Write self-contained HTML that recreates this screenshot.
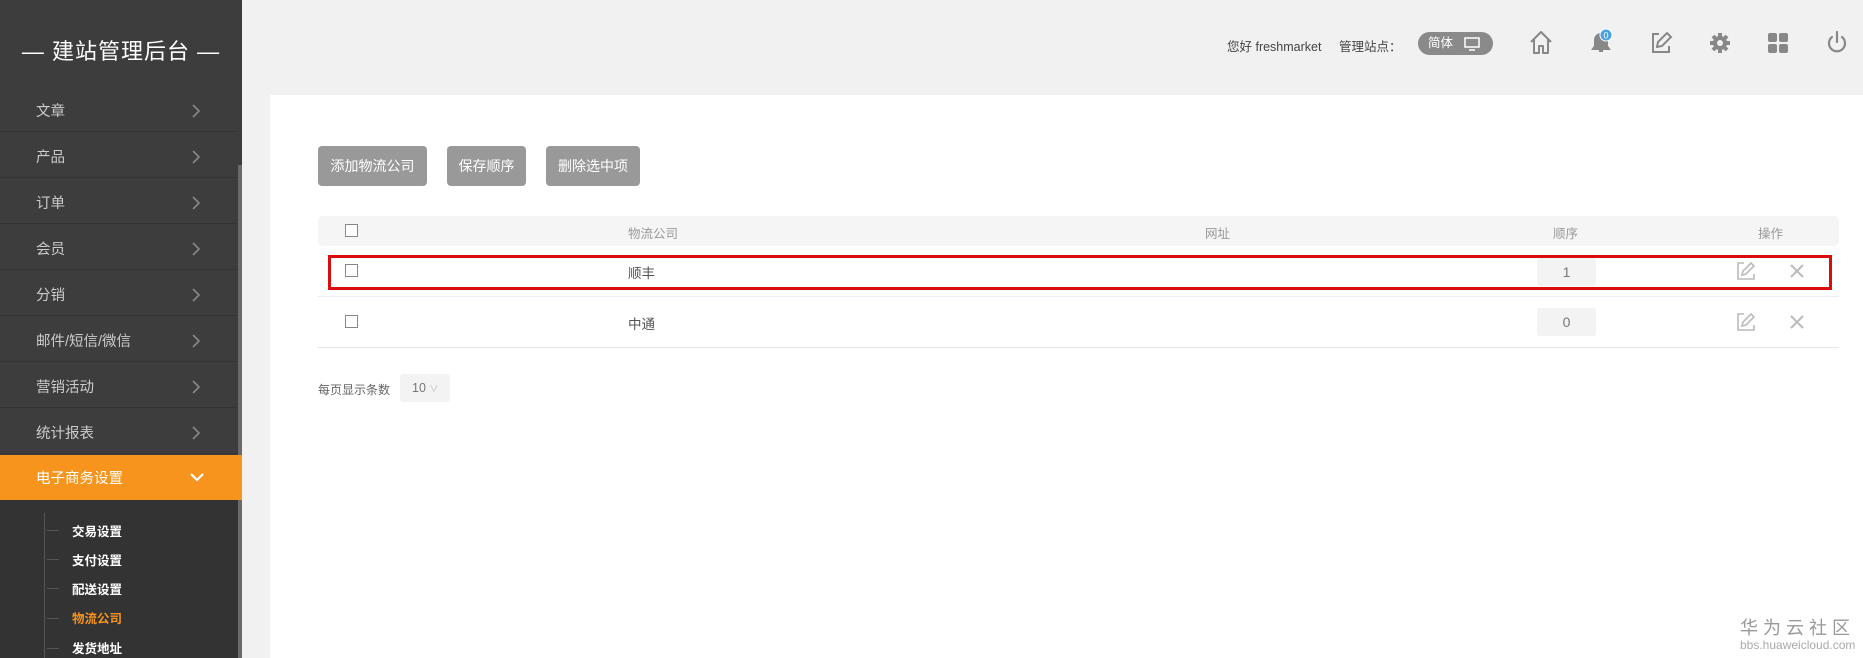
<!DOCTYPE html>
<html><head><meta charset="utf-8"><style>
*{margin:0;padding:0;box-sizing:border-box}
body{width:1863px;height:658px;overflow:hidden;background:#f1f1f1;font-family:"Liberation Sans","Noto Sans CJK SC",sans-serif;position:relative}
.a{position:absolute}
#side{left:0;top:0;width:242px;height:658px;background:#3d3d3d}
.title{left:0;width:242px;top:34px;text-align:center;color:#fff;font-size:22px;letter-spacing:1px}
.mi{left:0;width:238px;height:46px;border-bottom:1px solid #343434;color:#ccc;font-size:14.5px;line-height:52px;padding-left:36px}
.mi svg{position:absolute;left:191px;top:18px}
.sub{left:0;top:500px;width:238px;height:158px;background:#333}
.si{left:72px;color:#fff;font-size:12.5px;font-weight:bold}
.dash{left:47px;width:12px;height:1px;background:#555}
.btn{top:146px;height:40px;background:#999;color:#fff;border-radius:4px;font-size:14px;line-height:40px;text-align:center}
.th{font-size:12.5px;color:#999}
.cb{width:13px;height:13px;border:1px solid #888;background:#fff}
.td{font-size:13.5px;color:#555}
.ord{left:1537px;width:59px;height:28px;background:#f3f3f3;border-radius:3px;text-align:center;line-height:28px;color:#777;font-size:14px}
</style></head><body>
<div id="side" class="a">
<div class="a title">— 建站管理后台 —</div>
<div class="a" style="left:238px;top:165px;width:4px;height:493px;background:#6a6a6a"></div>
<div class="a mi" style="top:86px">文章<svg width="10" height="14"><path d="M2 1l6 6-6 6" stroke="#888" stroke-width="1.6" fill="none"/></svg></div>
<div class="a mi" style="top:132px">产品<svg width="10" height="14"><path d="M2 1l6 6-6 6" stroke="#888" stroke-width="1.6" fill="none"/></svg></div>
<div class="a mi" style="top:178px">订单<svg width="10" height="14"><path d="M2 1l6 6-6 6" stroke="#888" stroke-width="1.6" fill="none"/></svg></div>
<div class="a mi" style="top:224px">会员<svg width="10" height="14"><path d="M2 1l6 6-6 6" stroke="#888" stroke-width="1.6" fill="none"/></svg></div>
<div class="a mi" style="top:270px">分销<svg width="10" height="14"><path d="M2 1l6 6-6 6" stroke="#888" stroke-width="1.6" fill="none"/></svg></div>
<div class="a mi" style="top:316px">邮件/短信/微信<svg width="10" height="14"><path d="M2 1l6 6-6 6" stroke="#888" stroke-width="1.6" fill="none"/></svg></div>
<div class="a mi" style="top:362px">营销活动<svg width="10" height="14"><path d="M2 1l6 6-6 6" stroke="#888" stroke-width="1.6" fill="none"/></svg></div>
<div class="a mi" style="top:408px">统计报表<svg width="10" height="14"><path d="M2 1l6 6-6 6" stroke="#888" stroke-width="1.6" fill="none"/></svg></div>
<div class="a sub"></div>
<div class="a" style="left:0;top:455px;width:242px;height:45px;background:#f7941d"></div>
<div class="a" style="left:36px;top:457px;height:45px;line-height:45px;color:#fff;font-size:14.5px">电子商务设置</div>
<svg class="a" style="left:189px;top:472px" width="16" height="10"><path d="M2 2l6 6 6-6" stroke="#fff" stroke-width="2.2" fill="none"/></svg>
<div class="a" style="left:44px;top:513px;width:1px;height:145px;background:#555"></div>
<div class="a dash" style="top:530px"></div><div class="a si" style="top:521px">交易设置</div>
<div class="a dash" style="top:559px"></div><div class="a si" style="top:550px">支付设置</div>
<div class="a dash" style="top:588px"></div><div class="a si" style="top:579px">配送设置</div>
<div class="a dash" style="top:618px"></div><div class="a si" style="top:608px;color:#f7941d">物流公司</div>
<div class="a dash" style="top:648px"></div><div class="a si" style="top:638px">发货地址</div>
</div>
<div class="a" style="left:1227px;top:36px;font-size:12.5px;color:#444">您好 freshmarket</div>
<div class="a" style="left:1339px;top:36px;font-size:12.5px;color:#444">管理站点：</div>
<div class="a" style="left:1418px;top:32px;width:75px;height:23px;border-radius:12px;background:#8a8a8a;color:#fff;font-size:12.5px;line-height:23px;padding-left:10px">简体
<svg class="a" style="left:46px;top:5px" width="16" height="14"><rect x="1" y="1" width="14" height="9" fill="none" stroke="#fff" stroke-width="1.5"/><path d="M5 13h6" stroke="#fff" stroke-width="1.5"/></svg></div>
<svg class="a" style="left:1529px;top:30px" width="24" height="26"><path d="M2 12L12 2l10 10M5 9v14h5v-7h4v7h5V9" stroke="#888" stroke-width="2" fill="none" stroke-linejoin="round"/></svg>
<svg class="a" style="left:1589px;top:28px" width="26" height="28"><path d="M4 21h16l-2-3v-6a6 6 0 0 0-12 0v6zM10 23h4" stroke="#888" stroke-width="2" fill="#888"/><circle cx="17" cy="7" r="6" fill="#4aa3df" stroke="#fff" stroke-width="1"/><text x="17" y="10.5" font-size="9" fill="#fff" text-anchor="middle" font-family="Liberation Sans">0</text></svg>
<svg class="a" style="left:1649px;top:31px" width="24" height="24"><path d="M10 3H4v18h16v-6" stroke="#888" stroke-width="2" fill="none"/><path d="M8 16l1-5 9-9 4 4-9 9z" stroke="#888" stroke-width="2" fill="none"/></svg>
<svg class="a" style="left:1708px;top:31px" width="24" height="24"><circle cx="12" cy="12" r="7" fill="#888"/><path d="M12 2v20M2 12h20M5 5l14 14M19 5L5 19" stroke="#888" stroke-width="4"/><circle cx="12" cy="12" r="3" fill="#f1f1f1"/></svg>
<svg class="a" style="left:1767px;top:32px" width="22" height="22"><rect x="1" y="1" width="9" height="9" rx="2" fill="#888"/><rect x="12" y="1" width="9" height="9" rx="2" fill="#888"/><rect x="1" y="12" width="9" height="9" rx="2" fill="#888"/><rect x="12" y="12" width="9" height="9" rx="2" fill="#888"/></svg>
<svg class="a" style="left:1825px;top:30px" width="24" height="26"><path d="M7 7a8 8 0 1 0 10 0M12 2v10" stroke="#888" stroke-width="2.2" fill="none" stroke-linecap="round"/></svg>
<div class="a" style="left:270px;top:95px;width:1593px;height:563px;background:#fff"></div>
<div class="a btn" style="left:318px;width:109px">添加物流公司</div>
<div class="a btn" style="left:447px;width:79px">保存顺序</div>
<div class="a btn" style="left:546px;width:94px">删除选中项</div>
<div class="a" style="left:318px;top:216px;width:1521px;height:30px;background:#f5f5f5;border-radius:5px"></div>
<div class="a cb" style="left:345px;top:224px"></div>
<div class="a th" style="left:628px;top:223px">物流公司</div>
<div class="a th" style="left:1205px;top:223px">网址</div>
<div class="a th" style="left:1553px;top:223px">顺序</div>
<div class="a th" style="left:1758px;top:223px">操作</div>
<div class="a" style="left:318px;top:296px;width:1521px;height:1px;background:#e8eef4"></div>
<div class="a" style="left:318px;top:347px;width:1521px;height:1px;background:#e6e6e6"></div>
<div class="a cb" style="left:345px;top:264px"></div>
<div class="a td" style="left:628px;top:262px">顺丰</div>
<div class="a ord" style="top:258px">1</div>
<div class="a cb" style="left:345px;top:315px"></div>
<div class="a td" style="left:628px;top:313px">中通</div>
<div class="a ord" style="top:308px">0</div>
<svg class="a" style="left:1736px;top:261px" width="20" height="20"><path d="M8 2H2v16h16v-5" stroke="#bbb" stroke-width="1.6" fill="none"/><path d="M6 14l1-4 8-8 3 3-8 8z" stroke="#bbb" stroke-width="1.6" fill="none"/></svg>
<svg class="a" style="left:1736px;top:312px" width="20" height="20"><path d="M8 2H2v16h16v-5" stroke="#bbb" stroke-width="1.6" fill="none"/><path d="M6 14l1-4 8-8 3 3-8 8z" stroke="#bbb" stroke-width="1.6" fill="none"/></svg>
<svg class="a" style="left:1789px;top:263px" width="16" height="16"><path d="M2 2l12 12M14 2L2 14" stroke="#bbb" stroke-width="2"/></svg>
<svg class="a" style="left:1789px;top:314px" width="16" height="16"><path d="M2 2l12 12M14 2L2 14" stroke="#bbb" stroke-width="2"/></svg>
<div class="a" style="left:328px;top:255px;width:1504px;height:35px;border:3px solid #d80d0d"></div>
<div class="a" style="left:318px;top:381px;font-size:12px;color:#666">每页显示条数</div>
<div class="a" style="left:400px;top:374px;width:50px;height:28px;background:#f3f3f3;border-radius:3px;font-size:12.5px;color:#777;line-height:28px;padding-left:12px">10 <span style="font-size:9px;color:#bbb">∨</span></div>
<div class="a" style="left:1740px;top:614px;font-size:18px;color:#999;letter-spacing:5px">华为云社区</div>
<div class="a" style="left:1740px;top:638px;font-size:12px;color:#aaa">bbs.huaweicloud.com</div>
</body></html>
